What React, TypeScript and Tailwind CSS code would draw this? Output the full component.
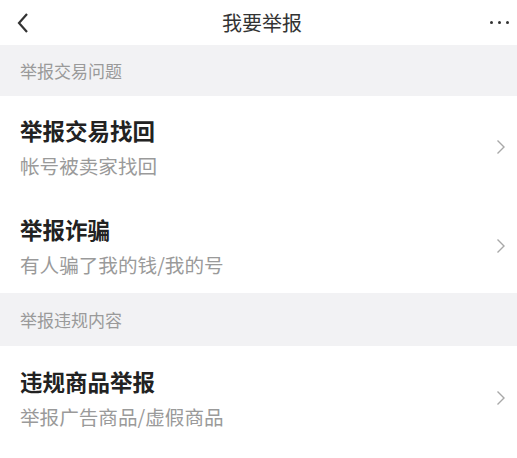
const font = { fontFamily: '"Noto Sans CJK SC", "Noto Sans", sans-serif' };

type Item = { title: string; desc: string };

const SectionTitle = ({ text, h }: { text: string; h: string }) => (
    <div className={`bg-[#f2f2f4] ${h} flex items-center px-5 text-[17px] text-[#9a9a9a]`}>{text}</div>
);

const Chevron = () => (
    <svg width="10" height="16" viewBox="0 0 10 16" fill="none" className="mt-[4px]">
        <path d="M1.5 1.5 L8 8 L1.5 14.5" stroke="#a8a8a8" strokeWidth="1.4" />
    </svg>
);

const ReportItem = ({ item, h }: { item: Item; h: string }) => (
    <div className={`flex items-center justify-between bg-white pl-5 pr-[11px] ${h}`}>
        <div className="flex flex-col pt-[6px]">
            <p className="font-bold text-[22.5px] leading-[30px] text-[#222]">{item.title}</p>
            <p className="mt-[6px] text-[19.6px] leading-[30px] text-[#9a9a9a]">{item.desc}</p>
        </div>
        <Chevron />
    </div>
);

const App = () => {
    return (
        <div className="w-[517px] h-[458px] overflow-hidden bg-white" style={font}>
            <div className="h-[45px] flex items-center justify-between px-[15px]">
                <svg width="14" height="22" viewBox="0 0 14 22" fill="none" className="ml-[1px]">
                    <path d="M11 2 L3 11 L11 20" stroke="#333" strokeWidth="2.2" />
                </svg>
                <h1 className="text-[20px] text-[#333] ml-[4px]">我要举报</h1>
                <div className="flex gap-[5px] items-center mr-[-7px]">
                    <span className="w-[3px] h-[3px] rounded-full bg-[#333]" />
                    <span className="w-[3px] h-[3px] rounded-full bg-[#333]" />
                    <span className="w-[3px] h-[3px] rounded-full bg-[#333]" />
                </div>
            </div>
            <SectionTitle text="举报交易问题" h="h-[51px]" />
            <ReportItem item={{ title: "举报交易找回", desc: "帐号被卖家找回" }} h="h-[98px]" />
            <ReportItem item={{ title: "举报诈骗", desc: "有人骗了我的钱/我的号" }} h="h-[99px]" />
            <SectionTitle text="举报违规内容" h="h-[53px]" />
            <ReportItem item={{ title: "违规商品举报", desc: "举报广告商品/虚假商品" }} h="h-[100px]" />
        </div>
    );
};
export default App;
